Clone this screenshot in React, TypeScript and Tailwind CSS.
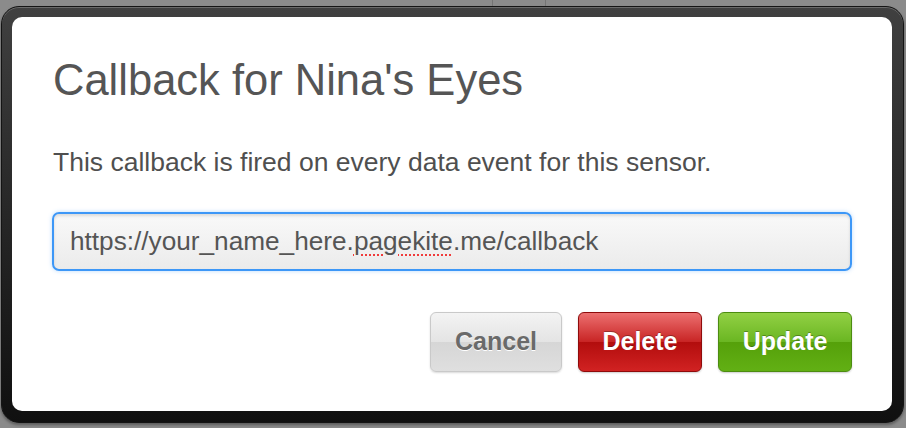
export default function App() {
  return (
    <div className="w-[906px] h-[428px] bg-[#8b8b8b] overflow-hidden font-['Liberation_Sans',Arial,sans-serif]">
      {/* window strip behind the sheet */}
      <div className="flex h-[6px]">
        <div className="w-[492px]" />
        <div className="w-[54px] border-x border-[#747474]" />
      </div>

      {/* dark sheet frame */}
      <div className="ml-[1px] w-[903px] h-[417px] rounded-[18px] border border-[#141414] bg-gradient-to-b from-[#404040] to-[#101010] shadow-[inset_0_1px_0_#6a6a6a,0_2px_3px_rgba(0,0,0,0.35)] p-[10px]">
        <div className="w-[880px] h-[394px] rounded-[10px] bg-white flex flex-col px-10 pt-[42px]">
          <h1 className="ml-px text-[43.5px] leading-[43.5px] font-normal text-[#555555]">
            Callback for Nina's Eyes
          </h1>

          <p className="ml-px mt-[46px] text-[26.5px] leading-[26.5px] text-[#4f4f4f]">
            This callback is fired on every data event for this sensor.
          </p>

          <div className="mt-[37px] h-[59px] rounded-[7px] border-2 border-[#3d97f7] bg-gradient-to-b from-[#f9f9f9] to-[#ebebeb] shadow-[inset_0_2px_3px_rgba(0,0,0,0.12),0_0_4px_rgba(61,151,247,0.35)] flex items-center px-4">
            <span className="text-[26.2px] text-[#555555] whitespace-nowrap">
              https://your_name_here.
              <span className="underline decoration-dotted decoration-[#f03a3a] decoration-2 underline-offset-[5px]">pagekite</span>
              .me/callback
            </span>
          </div>

          <div className="mt-[41px] flex justify-end gap-4">
            <button className="w-[132px] h-[60px] rounded-[6px] border border-[#c9c9c9] bg-[linear-gradient(to_bottom,#f3f3f3_0%,#e4e4e4_50%,#d6d6d6_50%,#dfdfdf_100%)] shadow-[0_1px_2px_rgba(0,0,0,0.15)] text-[25px] font-bold text-[#6a6a6a] [text-shadow:0_1px_0_#ffffff]">
              Cancel
            </button>
            <button className="w-[124px] h-[60px] rounded-[6px] border border-[#8f0b0b] bg-[linear-gradient(to_bottom,#ec7070_0%,#c82424_50%,#b20d0d_50%,#d12222_100%)] shadow-[0_1px_2px_rgba(0,0,0,0.2)] text-[25px] font-bold text-white [text-shadow:0_-1px_0_rgba(0,0,0,0.3)]">
              Delete
            </button>
            <button className="w-[134px] h-[60px] rounded-[6px] border border-[#4c8c10] bg-[linear-gradient(to_bottom,#92d044_0%,#6ab622_50%,#55a00a_50%,#62b014_100%)] shadow-[0_1px_2px_rgba(0,0,0,0.2)] text-[25px] font-bold text-white [text-shadow:0_-1px_0_rgba(0,0,0,0.3)]">
              Update
            </button>
          </div>
        </div>
      </div>
    </div>
  );
}
